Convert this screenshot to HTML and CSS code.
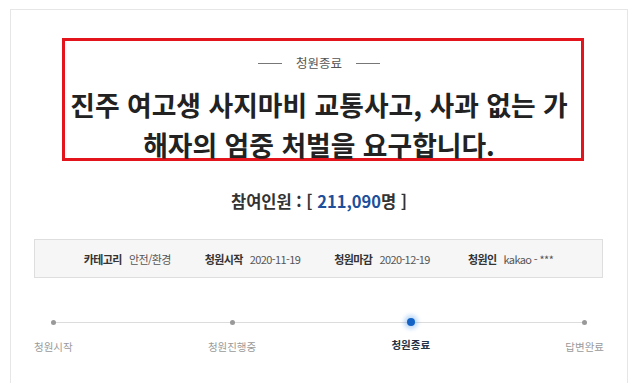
FILE: index.html
```html
<!DOCTYPE html>
<html lang="ko">
<head>
<meta charset="utf-8">
<title>청원</title>
<link rel="stylesheet" href="styles.css">
</head>
<body>
<div class="card">
  <div class="highlight">
    <div class="status"><span class="dash"></span><span>청원종료</span><span class="dash"></span></div>
    <h1 class="title">진주 여고생 사지마비 교통사고, 사과 없는 가<br>해자의 엄중 처벌을 요구합니다.</h1>
  </div>
  <p class="count">참여인원 : [ <span class="num">211,090</span>명 ]</p>
  <ul class="info">
    <li><strong>카테고리</strong><span>안전/환경</span></li>
    <li><strong>청원시작</strong><span>2020-11-19</span></li>
    <li><strong>청원마감</strong><span>2020-12-19</span></li>
    <li><strong>청원인</strong><span>kakao - ***</span></li>
  </ul>
  <ol class="steps">
    <li class="step"><i class="dot"></i><span>청원시작</span></li>
    <li class="step"><i class="dot"></i><span>청원진행중</span></li>
    <li class="step active"><i class="dot"></i><span>청원종료</span></li>
    <li class="step"><i class="dot"></i><span>답변완료</span></li>
  </ol>
</div>
</body>
</html>
```

FILE: styles.css
```css
* { box-sizing: border-box; }
html, body { margin: 0; padding: 0; background: #fff; }
body {
  font-family: "Noto Sans CJK KR", "Noto Sans", sans-serif;
  color: #222;
  overflow: hidden;
}
.card {
  margin: 9px 0 0 10px;
  width: 618px;
  height: 420px;
  border: 1px solid #e6e6e6;
  padding-top: 28px;
}
.highlight {
  margin-left: 51px;
  width: 522px;
  border: 3px solid #e3141c;
  padding: 13px 8px 0 0;
  height: 123px;
}
.status {
  display: flex;
  justify-content: center;
  align-items: center;
  gap: 14px;
  font-size: 12.5px;
  line-height: 18px;
  color: #555;
}
.dash {
  display: block;
  width: 24px;
  height: 1px;
  background: #777;
}
.title {
  margin: 13px -10px 0;
  text-align: center;
  font-size: 26.8px;
  font-weight: 700;
  line-height: 40px;
  color: #222;
  letter-spacing: 0;
}
.count {
  margin: 28px 0 0;
  text-align: center;
  font-size: 16.5px;
  line-height: 24px;
  font-weight: 700;
  color: #333;
}
.num { color: #1d4f9b; }
.info {
  list-style: none;
  margin: 26px 0 0 23px;
  padding: 0;
  width: 569px;
  height: 39px;
  background: #f6f6f6;
  border: 1px solid #dedede;
  display: flex;
  justify-content: center;
  align-items: center;
  gap: 34px;
  font-size: 11px;
  letter-spacing: -0.6px;
}
.info li { display: flex; gap: 7px; }
.info li:last-child { margin-left: 4px; }
.info strong { font-weight: 700; color: #333; }
.info span { color: #555; }
.steps {
  list-style: none;
  margin: 39px 0 0 23px;
  padding: 0;
  width: 570px;
  display: flex;
  justify-content: space-between;
  position: relative;
}
.steps::before {
  content: "";
  position: absolute;
  left: 18px;
  right: 20px;
  top: 5px;
  height: 1px;
  background: #dcdcdc;
}
.step {
  display: flex;
  flex-direction: column;
  align-items: center;
  gap: 15px;
  position: relative;
  font-size: 10.5px;
  line-height: 14px;
  color: #9a9a9a;
}
.dot {
  display: block;
  width: 5px;
  height: 5px;
  margin-top: 3px;
  border-radius: 50%;
  background: #999;
}
.step.active { color: #243245; font-weight: 700; }
.step.active .dot {
  width: 8px;
  height: 8px;
  margin-top: 1px;
  margin-bottom: -3px;
  background: #1363c6;
  box-shadow: 0 0 4px 3px rgba(40, 130, 230, 0.3);
}
```
